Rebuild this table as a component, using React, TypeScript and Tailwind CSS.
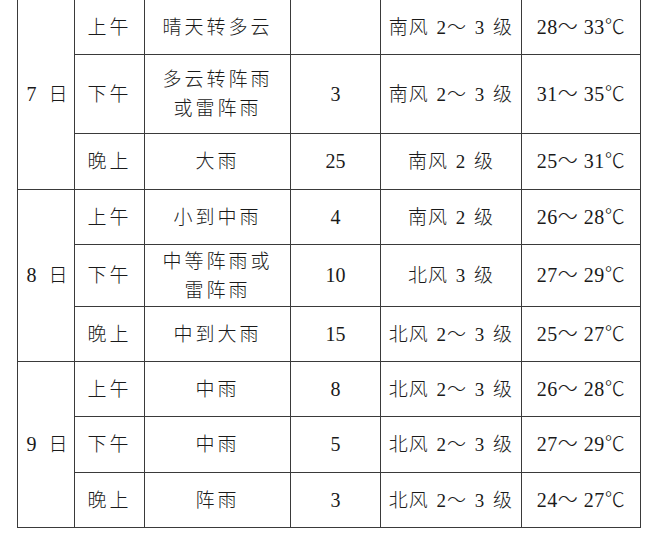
const rows = [
  { day: "7", items: [
    { t: "上午", w: ["晴天转多云"], r: "", wind: "南风 2～ 3 级", temp: "28～ 33℃", h: "h-[55px]" },
    { t: "下午", w: ["多云转阵雨", "或雷阵雨"], r: "3", wind: "南风 2～ 3 级", temp: "31～ 35℃", h: "h-[79px]" },
    { t: "晚上", w: ["大雨"], r: "25", wind: "南风 2 级", temp: "25～ 31℃", h: "h-[56px]" },
  ] },
  { day: "8", items: [
    { t: "上午", w: ["小到中雨"], r: "4", wind: "南风 2 级", temp: "26～ 28℃", h: "h-[55px]" },
    { t: "下午", w: ["中等阵雨或", "雷阵雨"], r: "10", wind: "北风 3 级", temp: "27～ 29℃", h: "h-[62px]" },
    { t: "晚上", w: ["中到大雨"], r: "15", wind: "北风 2～ 3 级", temp: "25～ 27℃", h: "h-[55px]" },
  ] },
  { day: "9", items: [
    { t: "上午", w: ["中雨"], r: "8", wind: "北风 2～ 3 级", temp: "26～ 28℃", h: "h-[55px]" },
    { t: "下午", w: ["中雨"], r: "5", wind: "北风 2～ 3 级", temp: "27～ 29℃", h: "h-[56px]" },
    { t: "晚上", w: ["阵雨"], r: "3", wind: "北风 2～ 3 级", temp: "24～ 27℃", h: "h-[55px]" },
  ] },
]

const cell = "border border-[#3a3a3a] text-center align-middle p-0"

export default function App() {
  return (
    <div className="w-[660px] h-[547px] bg-white overflow-hidden text-[#1a1a1a] font-light [font-family:'Liberation_Serif','Noto_Sans_CJK_SC',serif]">
      <table className="ml-[17px] -mt-px w-[623px] table-fixed border-collapse text-[20px] leading-[29px]">
        <colgroup>
          <col className="w-[57px]" />
          <col className="w-[70px]" />
          <col className="w-[146px]" />
          <col className="w-[90px]" />
          <col className="w-[141px]" />
          <col className="w-[119px]" />
        </colgroup>
        <tbody>
          {rows.map((d) =>
            d.items.map((it, i) => (
              <tr key={d.day + it.t} className={it.h}>
                {i === 0 && (
                  <td rowSpan={3} className={cell}>
                    <div className="flex justify-center items-center gap-[12px] pl-[2px]">
                      <span>{d.day}</span>
                      <span className="text-[19px]">日</span>
                    </div>
                  </td>
                )}
                <td className={cell + " tracking-[3px] text-[19px]"}>{it.t}</td>
                <td className={cell + " tracking-[3px] text-[19px]"}>
                  {it.w.map((l) => (
                    <div key={l}>{l}</div>
                  ))}
                </td>
                <td className={cell}>{it.r}</td>
                <td className={cell + " text-[19px] tracking-[1px] [word-spacing:2px]"}>{it.wind}</td>
                <td className={cell + " tracking-[0.5px]"}>{it.temp}</td>
              </tr>
            ))
          )}
        </tbody>
      </table>
    </div>
  )
}
